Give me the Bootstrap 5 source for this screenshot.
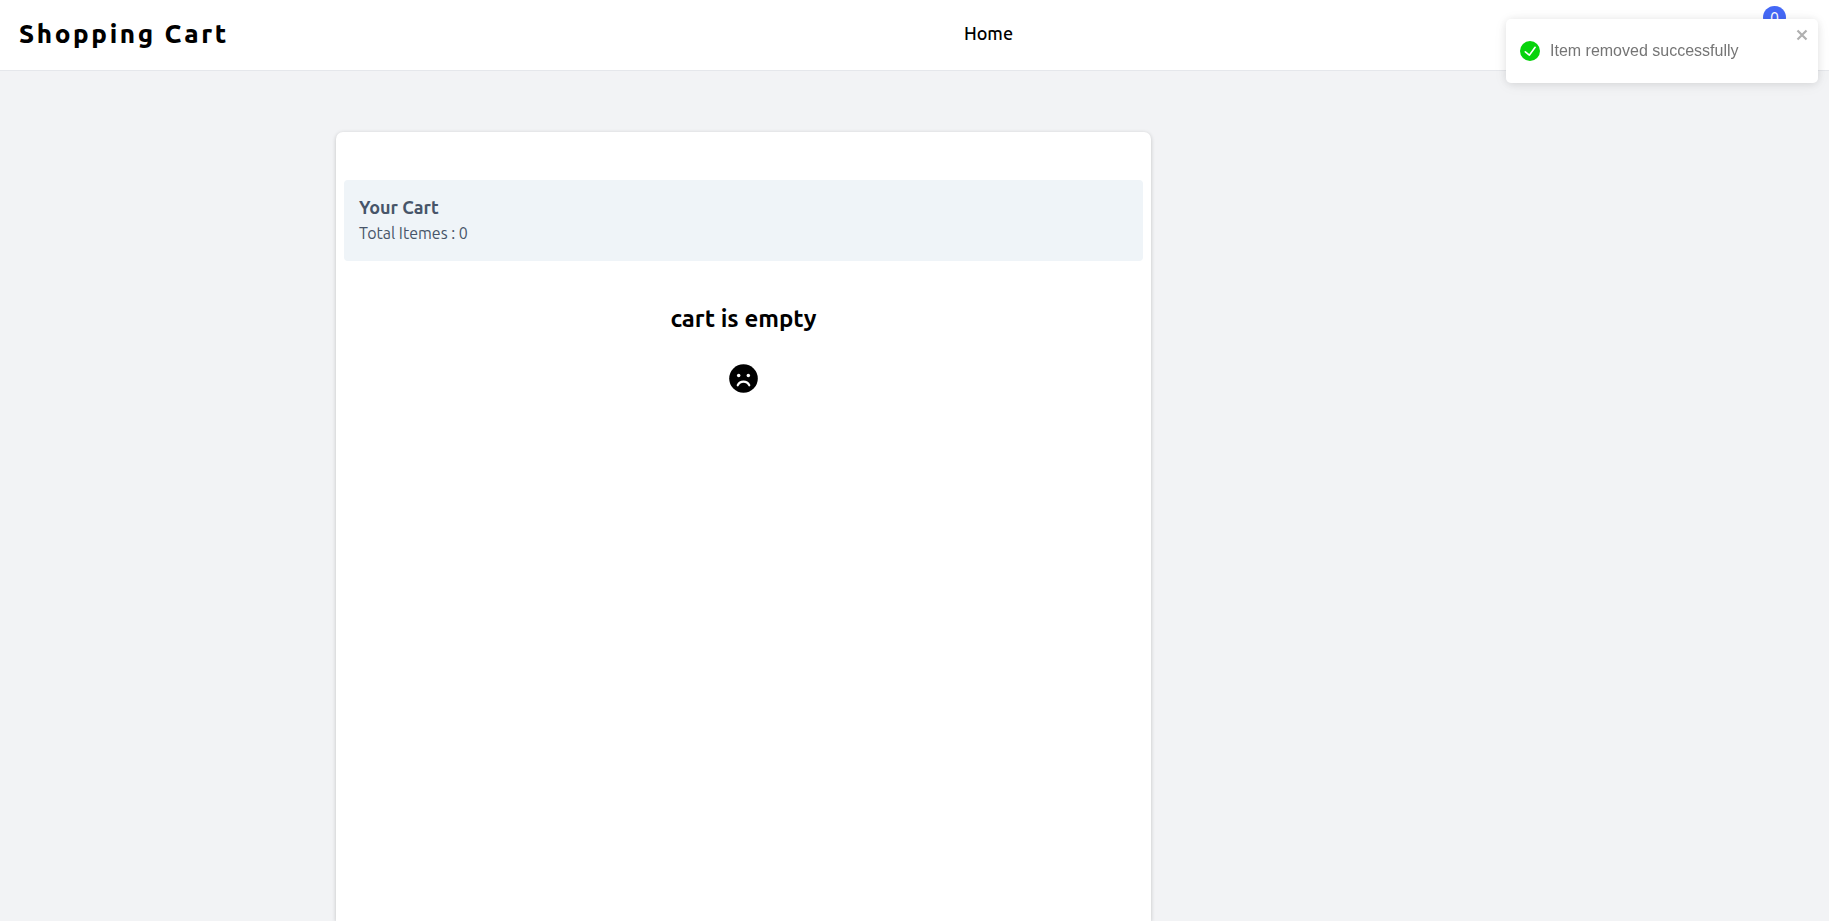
<!DOCTYPE html>
<html lang="en">
<head>
<meta charset="utf-8">
<meta name="viewport" content="width=device-width, initial-scale=1">
<title>Shopping Cart</title>
<link href="https://cdn.jsdelivr.net/npm/bootstrap@5.3.0/dist/css/bootstrap.min.css" rel="stylesheet">
<style>
  body { font-family: Ubuntu, "Noto Sans", sans-serif; background: #f2f3f5; color: #000; }
  .site-nav { height: 71px; background: #fff; border-bottom: 1px solid #e5e7eb; padding: 0 19px 4px; }
  .brand { font-size: 26px; line-height: 37px; font-weight: 800; letter-spacing: .1em; color: #000; }
  .home-link { font-size: 18px; line-height: 28px; font-weight: 500; color: #000; }
  .cart-link { width: 32px; height: 32px; color: #000; margin-right: 30px; }
  .cart-count { position: absolute; top: -11px; right: -6px; width: 23px; height: 23px; font-size: 16px; background: #4468f6; color: #fff; }
  .shop { max-width: 1157px; padding-top: 61px; }
  .cart-panel { background: #fff; border-radius: 7px 7px 0 0; padding: 48px 8px 0; box-shadow: 0 1px 4px rgba(0,0,0,.2); }
  .cart-side { flex: 0 0 342px; }
  .cart-head { background: #eff4f8; border-radius: 4px; padding: 13px 15px 15px; color: #475569; }
  .cart-head h1 { font-size: 18px; line-height: 28px; font-weight: 600; }
  .cart-head p { font-size: 16px; line-height: 25px; }
  .empty-title { font-size: 24px; line-height: 32px; font-weight: 600; margin: 42px 0 29px; }
  .notice { top: 19px; right: 11px; width: 312px; height: 64px; border: 0; border-radius: 5px; background: #fff; color: #757575; padding: 0 14px; font: 16px/24px "Liberation Sans", sans-serif; box-shadow: 0 1px 10px rgba(0,0,0,.1), 0 2px 15px rgba(0,0,0,.05); }
  .notice-text { margin-left: 10px; }
  .notice-close { top: 8px; right: 8px; line-height: 0; color: #b0b0b0; }
</style>
</head>
<body class="min-vh-100 d-flex flex-column">
<nav class="site-nav d-flex align-items-center justify-content-between">
  <a class="brand text-decoration-none" href="#">Shopping Cart</a>
  <a class="home-link text-decoration-none" href="#">Home</a>
  <a class="cart-link position-relative d-block" href="#" aria-label="Cart">
    <svg width="32" height="32" viewBox="0 0 24 24" fill="none" stroke="currentColor" stroke-width="2"><path d="M2 3h3l3 12h11l3-9H6"/><circle cx="9" cy="20" r="1"/><circle cx="18" cy="20" r="1"/></svg>
    <span class="cart-count rounded-circle d-flex align-items-center justify-content-center">0</span>
  </a>
</nav>

<main class="shop w-100 mx-auto d-flex flex-grow-1">
  <section class="cart-panel flex-grow-1">
    <header class="cart-head">
      <h1 class="m-0">Your Cart</h1>
      <p class="m-0">Total Itemes : 0</p>
    </header>
    <div class="text-center">
      <h2 class="empty-title">cart is empty</h2>
      <svg class="d-block mx-auto" width="29" height="29" viewBox="0 0 30 30" aria-hidden="true">
        <circle cx="15" cy="15" r="14.8"/>
        <circle cx="10" cy="12" r="1.8" fill="#fff"/>
        <circle cx="20" cy="12" r="1.8" fill="#fff"/>
        <path d="M9 22c2.500-5 9.500-5 12 0" fill="none" stroke="#fff" stroke-width="2.200" stroke-linecap="round"/>
      </svg>
    </div>
  </section>
  <div class="cart-side"></div>
</main>

<div class="notice position-fixed d-flex align-items-center" role="alert">
  <svg class="flex-shrink-0" width="20" height="20" viewBox="0 0 24 24" aria-hidden="true"><path fill="#07d30c" d="M12 0a12 12 0 1012 12A12.014 12.014 0 0012 0zm6.927 8.200l-6.845 9.289a1.011 1.011 0 01-1.430.188l-4.888-3.908a1 1 0 111.250-1.562l4.076 3.261 6.227-8.451a1 1 0 111.610 1.183z"/></svg>
  <span class="notice-text">Item removed successfully</span>
  <button class="notice-close btn p-0 border-0 position-absolute" type="button" aria-label="close">
    <svg width="16" height="16" viewBox="0 0 16 16" aria-hidden="true"><path d="M3.500 3.500l9 9M12.500 3.500l-9 9" fill="none" stroke="currentColor" stroke-width="2.200"/></svg>
  </button>
</div>
<script src="https://cdn.jsdelivr.net/npm/bootstrap@5.3.0/dist/js/bootstrap.bundle.min.js"></script>
</body>
</html>
